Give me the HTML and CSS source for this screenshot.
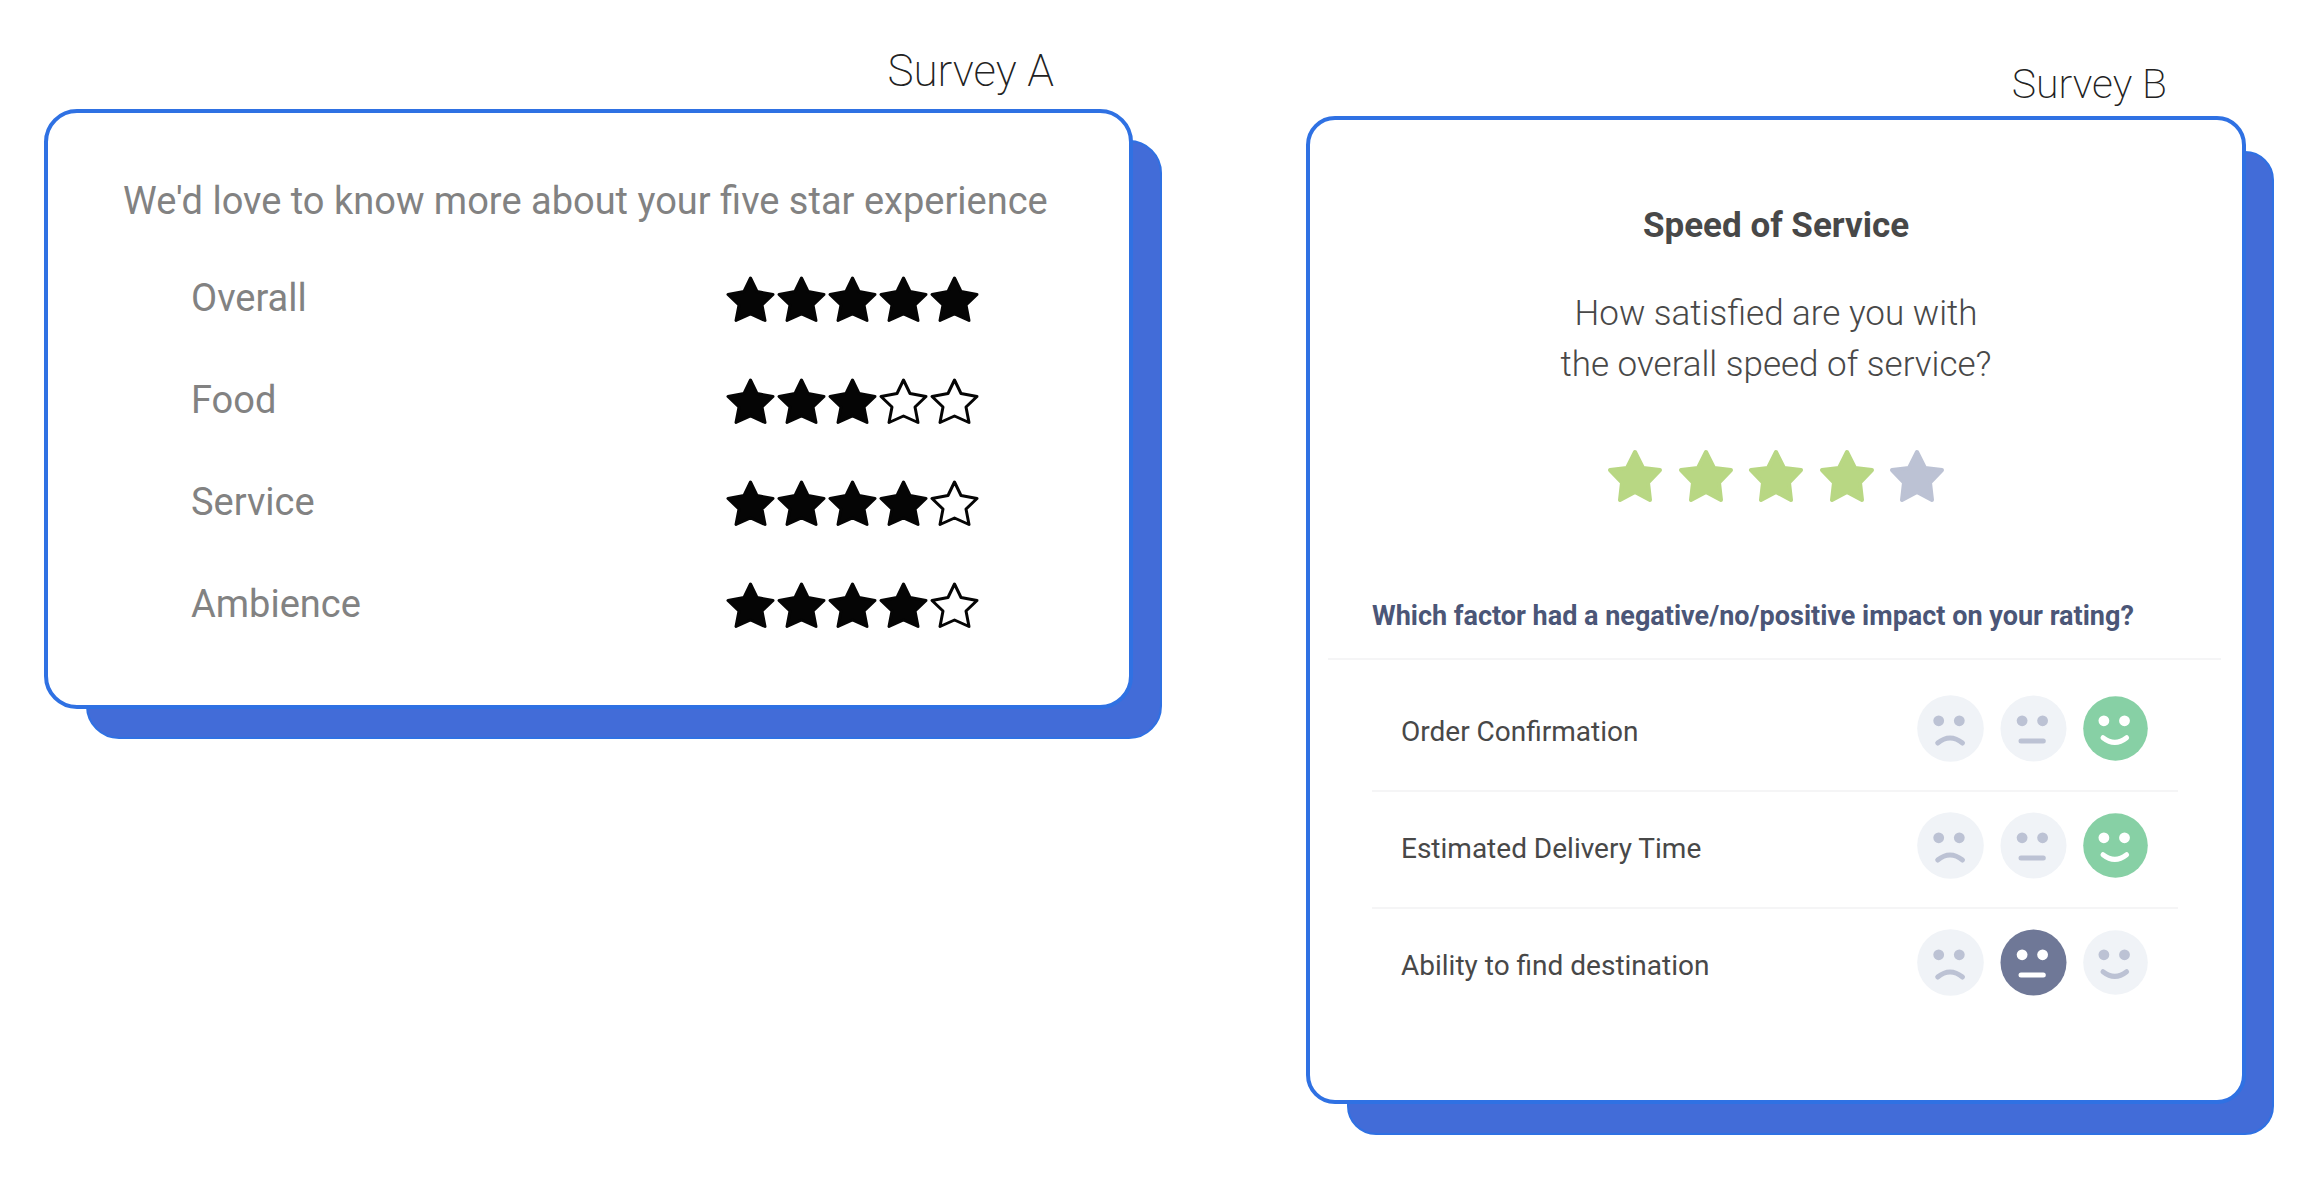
FILE: index.html
```
<!DOCTYPE html>
<html lang="en">
  <head>
    <meta charset="UTF-8">
    <title>Surveys</title>
    <link rel="stylesheet" href="styles.css">
  </head>
  <body>
    <svg class="sprite" aria-hidden="true">
      <symbol id="star" viewBox="0 0 51 51">
        <path d="M25.5 4L32 17.5L48 20.5L37 31L40 46.5L25.5 40L11 46.5L14 31L3 20.5L19 17.5Z"/>
      </symbol>
      <symbol id="star-wide" viewBox="0 0 56 56">
        <path d="M28 4L36 20L53 22L41 34.5L43 52L28 44L13 52L15 34.5L3 22L20 20Z"/>
      </symbol>
      <symbol id="sad" viewBox="0 0 67 67">
        <circle class="disc" cx="33.5" cy="33.5" r="33.3"/>
        <circle class="eye" cx="21.7" cy="25.8" r="5.4"/>
        <circle class="eye" cx="42.3" cy="25.8" r="5.4"/>
        <path class="mouth" d="M20.7 48Q33 38 45.5 48"/>
      </symbol>
      <symbol id="neutral" viewBox="0 0 67 67">
        <circle class="disc" cx="33.5" cy="33.5" r="33"/>
        <circle class="eye" cx="22.1" cy="25.8" r="5.4"/>
        <circle class="eye" cx="42.6" cy="25.8" r="5.4"/>
        <path class="mouth" d="M21 46H43.3"/>
      </symbol>
      <symbol id="happy" viewBox="0 0 67 67">
        <circle class="disc" cx="33.5" cy="33.5" r="32.3"/>
        <circle class="eye" cx="21.9" cy="25.8" r="5.4"/>
        <circle class="eye" cx="42.5" cy="25.8" r="5.4"/>
        <path class="mouth" d="M21 42.7Q32.8 52 44.6 42.7"/>
      </symbol>
    </svg>

    <main class="surveys">
      <section class="survey survey-a">
        <h1>Survey A</h1>
        <form class="card">
          <h2>We'd love to know more about your five star experience</h2>
          <div class="row" role="radiogroup" aria-labelledby="overall">
            <span id="overall">Overall</span>
            <div class="stars">
              <label><input type="radio" name="overall" aria-label="1 star"><svg><use href="#star"/></svg></label>
              <label><input type="radio" name="overall" aria-label="2 stars"><svg><use href="#star"/></svg></label>
              <label><input type="radio" name="overall" aria-label="3 stars"><svg><use href="#star"/></svg></label>
              <label><input type="radio" name="overall" aria-label="4 stars"><svg><use href="#star"/></svg></label>
              <label><input type="radio" name="overall" aria-label="5 stars" checked><svg><use href="#star"/></svg></label>
            </div>
          </div>
          <div class="row" role="radiogroup" aria-labelledby="food">
            <span id="food">Food</span>
            <div class="stars">
              <label><input type="radio" name="food" aria-label="1 star"><svg><use href="#star"/></svg></label>
              <label><input type="radio" name="food" aria-label="2 stars"><svg><use href="#star"/></svg></label>
              <label><input type="radio" name="food" aria-label="3 stars" checked><svg><use href="#star"/></svg></label>
              <label><input type="radio" name="food" aria-label="4 stars"><svg><use href="#star"/></svg></label>
              <label><input type="radio" name="food" aria-label="5 stars"><svg><use href="#star"/></svg></label>
            </div>
          </div>
          <div class="row" role="radiogroup" aria-labelledby="service">
            <span id="service">Service</span>
            <div class="stars">
              <label><input type="radio" name="service" aria-label="1 star"><svg><use href="#star"/></svg></label>
              <label><input type="radio" name="service" aria-label="2 stars"><svg><use href="#star"/></svg></label>
              <label><input type="radio" name="service" aria-label="3 stars"><svg><use href="#star"/></svg></label>
              <label><input type="radio" name="service" aria-label="4 stars" checked><svg><use href="#star"/></svg></label>
              <label><input type="radio" name="service" aria-label="5 stars"><svg><use href="#star"/></svg></label>
            </div>
          </div>
          <div class="row" role="radiogroup" aria-labelledby="ambience">
            <span id="ambience">Ambience</span>
            <div class="stars">
              <label><input type="radio" name="ambience" aria-label="1 star"><svg><use href="#star"/></svg></label>
              <label><input type="radio" name="ambience" aria-label="2 stars"><svg><use href="#star"/></svg></label>
              <label><input type="radio" name="ambience" aria-label="3 stars"><svg><use href="#star"/></svg></label>
              <label><input type="radio" name="ambience" aria-label="4 stars" checked><svg><use href="#star"/></svg></label>
              <label><input type="radio" name="ambience" aria-label="5 stars"><svg><use href="#star"/></svg></label>
            </div>
          </div>
        </form>
      </section>

      <section class="survey survey-b">
        <h1>Survey B</h1>
        <form class="card">
          <h2>Speed of Service</h2>
          <p id="speed">How satisfied are you with<br>the overall speed of service?</p>
          <div class="stars" role="radiogroup" aria-labelledby="speed">
            <label><input type="radio" name="speed" aria-label="1 star"><svg><use href="#star-wide"/></svg></label>
            <label><input type="radio" name="speed" aria-label="2 stars"><svg><use href="#star-wide"/></svg></label>
            <label><input type="radio" name="speed" aria-label="3 stars"><svg><use href="#star-wide"/></svg></label>
            <label><input type="radio" name="speed" aria-label="4 stars" checked><svg><use href="#star-wide"/></svg></label>
            <label><input type="radio" name="speed" aria-label="5 stars"><svg><use href="#star-wide"/></svg></label>
          </div>
          <h3>Which factor had a negative/no/positive impact on your rating?</h3>
          <div class="factors">
            <div class="factor" role="radiogroup" aria-labelledby="order">
              <span id="order">Order Confirmation</span>
              <div class="faces">
                <label class="sad"><input type="radio" name="order" aria-label="Negative"><svg><use href="#sad"/></svg></label>
                <label class="neutral"><input type="radio" name="order" aria-label="No impact"><svg><use href="#neutral"/></svg></label>
                <label class="happy"><input type="radio" name="order" aria-label="Positive" checked><svg><use href="#happy"/></svg></label>
              </div>
            </div>
            <div class="factor" role="radiogroup" aria-labelledby="delivery">
              <span id="delivery">Estimated Delivery Time</span>
              <div class="faces">
                <label class="sad"><input type="radio" name="delivery" aria-label="Negative"><svg><use href="#sad"/></svg></label>
                <label class="neutral"><input type="radio" name="delivery" aria-label="No impact"><svg><use href="#neutral"/></svg></label>
                <label class="happy"><input type="radio" name="delivery" aria-label="Positive" checked><svg><use href="#happy"/></svg></label>
              </div>
            </div>
            <div class="factor" role="radiogroup" aria-labelledby="destination">
              <span id="destination">Ability to find destination</span>
              <div class="faces">
                <label class="sad"><input type="radio" name="destination" aria-label="Negative"><svg><use href="#sad"/></svg></label>
                <label class="neutral"><input type="radio" name="destination" aria-label="No impact" checked><svg><use href="#neutral"/></svg></label>
                <label class="happy"><input type="radio" name="destination" aria-label="Positive"><svg><use href="#happy"/></svg></label>
              </div>
            </div>
          </div>
        </form>
      </section>
    </main>
  </body>
</html>
```
FILE: styles.css
```
* {
  box-sizing: border-box;
}
body {
  margin: 0;
  font-family: Roboto, sans-serif;
  background-color: #FFFFFF;
}
h1, h2, h3, p {
  margin: 0;
}
.sprite {
  display: none;
}
.surveys {
  display: grid;
  grid-template-columns: 1089fr 940fr;
  align-items: start;
  gap: 173px;
  padding: 0 72px 40px 44px;
}
.survey {
  position: relative;
  z-index: 0;
}
.survey h1 {
  font-weight: 200;
  line-height: 52px;
  text-align: right;
  padding-right: 79px;
  color: #222;
}

/* card with a solid blue slab behind it */
.card {
  position: relative;
  background-color: #FFF;
  border: 4px solid #2F71E3;
}
.card::before {
  content: "";
  position: absolute;
  z-index: -2;
  background-color: #426CD8;
  border: 2px solid #2F71E3;
  border-radius: inherit;
}

label {
  display: block;
  cursor: pointer;
}
label svg {
  display: block;
  width: 100%;
  height: 100%;
}
input[type="radio"] {
  position: absolute;
  opacity: 0;
  pointer-events: none;
}
.stars, .faces {
  display: flex;
  justify-content: space-between;
}
.stars {
  stroke-linejoin: round;
}

/* Survey A */
.survey-a {
  padding-top: 45px;
}
.survey-a h1 {
  font-size: 44px;
  margin-bottom: 12px;
}
.survey-a .card {
  border-radius: 33px;
  padding: 62px 0 50px;
  color: #828282;
}
.survey-a .card::before {
  top: 27px;
  right: -33px;
  bottom: -34px;
  left: 38px;
}
.survey-a h2 {
  font-size: 38px;
  font-weight: normal;
  line-height: 52px;
  padding-left: 75px;
  margin-bottom: 20px;
}
.row {
  display: flex;
  align-items: center;
  justify-content: space-between;
  height: 102px;
  padding: 0 149px 0 143px;
  font-size: 38px;
  line-height: 52px;
}
.row .stars {
  padding-top: 2px;
}
.row label {
  width: 51px;
  height: 51px;
  fill: #050505;
  stroke: #050505;
  stroke-width: 3px;
}
.row label:has(input:checked) ~ label {
  fill: none;
}

/* Survey B */
.survey-b {
  padding-top: 58px;
}
.survey-b h1 {
  font-size: 41px;
  margin-bottom: 6px;
}
.survey-b .card {
  border-radius: 29px;
  padding: 80px 0 74px;
  color: #484848;
}
.survey-b .card::before {
  top: 31px;
  right: -32px;
  bottom: -35px;
  left: 37px;
}
.survey-b h2 {
  font-size: 35px;
  font-weight: 700;
  line-height: 51px;
  text-align: center;
  margin-bottom: 37px;
}
.survey-b p {
  font-size: 35px;
  font-weight: 300;
  line-height: 51px;
  text-align: center;
}
.survey-b .card > .stars {
  width: 338px;
  margin: 58px auto 92px;
}
.survey-b .stars label {
  width: 56px;
  height: 56px;
  fill: #B8D783;
  stroke: #B8D783;
  stroke-width: 4px;
}
.survey-b .stars label:has(input:checked) ~ label {
  fill: #BCC2D4;
  stroke: #BCC2D4;
}
.survey-b h3 {
  font-size: 27px;
  font-weight: 700;
  line-height: 40px;
  margin: 0 21px 15px 18px;
  padding: 0 0 22px 44px;
  border-bottom: 2px solid #F5F5F6;
  color: #4B5677;
}
.factors {
  margin: 0 64px 0 62px;
}
.factor {
  display: flex;
  align-items: center;
  justify-content: space-between;
  height: 117px;
  padding: 0 29px 8px;
  font-size: 28px;
  line-height: 40px;
  border-bottom: 2px solid #F5F5F6;
}
.factor:last-child {
  border-bottom-color: transparent;
}
.factor > span {
  padding-top: 6px;
}
.faces {
  width: 232px;
}
.faces label {
  --disc: #F0F3F7;
  --feature: #BCC2D4;
  width: 67px;
  height: 67px;
}
.faces label:has(input:checked) {
  --feature: #FFF;
}
.faces .sad:has(input:checked) {
  --disc: #E58A8A;
}
.faces .neutral:has(input:checked) {
  --disc: #6F7897;
}
.faces .happy:has(input:checked) {
  --disc: #87D0A5;
}
.disc {
  fill: var(--disc);
}
.eye {
  fill: var(--feature);
}
.mouth {
  fill: none;
  stroke: var(--feature);
  stroke-width: 5px;
  stroke-linecap: round;
}
```
